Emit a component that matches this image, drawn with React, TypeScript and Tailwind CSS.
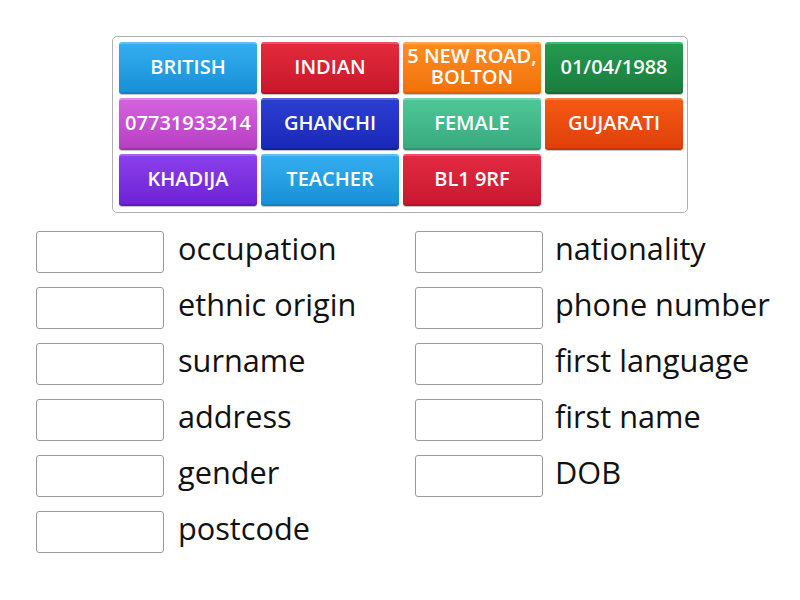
import React from 'react';

type Tile = { text: string; cls: string };

const tiles: Tile[] = [
  { text: 'BRITISH', cls: 'from-[#34adf0] to-[#1690d8] border-t-[#5cc0f4] border-b-[#1380c4]' },
  { text: 'INDIAN', cls: 'from-[#e22a3c] to-[#c8182a] border-t-[#ea5562] border-b-[#b01222]' },
  { text: '5 NEW ROAD, BOLTON', cls: 'from-[#ff8c22] to-[#f07208] border-t-[#ffa650] border-b-[#d86204]' },
  { text: '01/04/1988', cls: 'from-[#249a4e] to-[#1a7d3e] border-t-[#3cc070] border-b-[#156c34]' },
  { text: '07731933214', cls: 'from-[#d462dd] to-[#b83ec4] border-t-[#e088e6] border-b-[#a232ae]' },
  { text: 'GHANCHI', cls: 'from-[#2c3ed2] to-[#1a28b8] border-t-[#5262dc] border-b-[#141fa0]' },
  { text: 'FEMALE', cls: 'from-[#4fc698] to-[#38ab7f] border-t-[#72d2ac] border-b-[#2e966e]' },
  { text: 'GUJARATI', cls: 'from-[#f65816] to-[#df4008] border-t-[#f87a44] border-b-[#c43806]' },
  { text: 'KHADIJA', cls: 'from-[#8c3eea] to-[#6d22d6] border-t-[#a464ee] border-b-[#5e1abc]' },
  { text: 'TEACHER', cls: 'from-[#34adf0] to-[#1690d8] border-t-[#5cc0f4] border-b-[#1380c4]' },
  { text: 'BL1 9RF', cls: 'from-[#e22a42] to-[#c81830] border-t-[#ea5566] border-b-[#b01226]' },
];

const left = ['occupation', 'ethnic origin', 'surname', 'address', 'gender', 'postcode'];
const right = ['nationality', 'phone number', 'first language', 'first name', 'DOB'];

function Slot({ label, gap }: { label: string; gap: string }) {
  return (
    <div className={`flex items-start ${gap}`}>
      <div className="w-[128px] h-[42px] shrink-0 border border-[#9a9a9a] rounded-[3px] bg-white" />
      <span className="text-[30.7px] leading-[34px] text-[#111]">{label}</span>
    </div>
  );
}

export default function App() {
  return (
    <main className="min-h-screen w-[800px] bg-white pt-[36px]" style={{ fontFamily: '"Open Sans", sans-serif' }}>
      {/* Tiles */}
      <div className="mx-auto w-[576px] h-[177px] border border-[#b0b0b0] rounded-[5px] pl-[6px] pt-[5px]">
        <div className="grid grid-cols-[138px_138px_138px_138px] auto-rows-[52px] gap-[4px]">
          {tiles.map((t, i) => (
            <div
              key={i}
              className={`flex items-center justify-center text-center pb-[4px] rounded-[3px] border-t-2 border-b-2 bg-linear-to-b text-white font-semibold text-[20px] leading-[21px] shadow-[0_1px_1px_rgba(0,0,0,0.25)] ${t.cls}`}
            >
              {t.text}
            </div>
          ))}
        </div>
      </div>

      {/* Targets */}
      <div className="grid grid-cols-[379px_1fr] pl-[36px] mt-[18px]">
        <div className="flex flex-col gap-[14px]">
          {left.map((l) => (
            <Slot key={l} label={l} gap="gap-[14px]" />
          ))}
        </div>
        <div className="flex flex-col gap-[14px]">
          {right.map((l) => (
            <Slot key={l} label={l} gap="gap-[12px]" />
          ))}
        </div>
      </div>
    </main>
  );
}
